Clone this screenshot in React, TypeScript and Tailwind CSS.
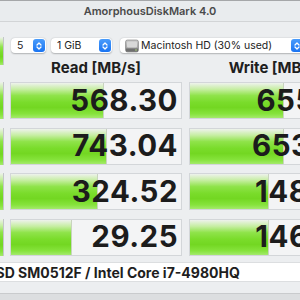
import React from 'react';

const rows = [
  { read: '568.30', readBar: 93, write: '655.41', writeBar: 94 },
  { read: '743.04', readBar: 96, write: '653.27', writeBar: 94 },
  { read: '324.52', readBar: 87, write: '148.93', writeBar: 79 },
  { read: '29.25', readBar: 61, write: '146.58', writeBar: 79 },
];

const barBg =
  'bg-[linear-gradient(to_bottom,#eef2ec_0%,#c6eea2_18%,#8fe34a_36%,#7adc2b_55%,#73d722_70%,#86e33c_88%,#a4ea6c_100%)]';

const Stepper = () => (
  <div className="w-[12px] h-[13px] rounded-[3px] bg-[linear-gradient(to_bottom,#4a9cfb,#1a74f2)] flex items-center justify-center">
    <svg width="8" height="10" viewBox="0 0 8 10" fill="none" stroke="white" strokeWidth="1.3" strokeLinecap="round" strokeLinejoin="round">
      <path d="M2 4 L4 2 L6 4" />
      <path d="M2 6 L4 8 L6 6" />
    </svg>
  </div>
);

const DiskIcon = () => (
  <svg width="14" height="14" viewBox="0 0 14 14">
    <defs>
      <linearGradient id="dk" x1="0" y1="0" x2="0" y2="1">
        <stop offset="0" stopColor="#c9c9c9" />
        <stop offset="1" stopColor="#8e8e8e" />
      </linearGradient>
    </defs>
    <rect x="0.5" y="1" width="13" height="12" rx="2" fill="url(#dk)" stroke="#7a7a7a" strokeWidth="0.6" />
    <rect x="2" y="2.5" width="10" height="6" rx="1" fill="#d8d8d8" />
    <rect x="1" y="9.5" width="12" height="3" fill="#6f6f6f" />
    <circle cx="11" cy="11" r="0.7" fill="#b9f07a" />
  </svg>
);

const Strip = ({ className }: { className: string }) => (
  <div className={`w-[4px] flex ${className}`}>
    <div className={`w-[3px] h-full ${barBg}`} />
    <div className="w-[1px] h-full bg-[#c3c6c9]" />
  </div>
);

const Cell = ({ value, bar }: { value: string; bar: number }) => (
  <div className="w-[172px] h-[37px] border border-[#d3d6d9] bg-[#f3f4f5] grid">
    <div className="[grid-area:1/1] h-full flex">
      <div className={`h-full ${barBg} border-r border-[#c8d4be]`} style={{ width: bar }} />
    </div>
    <div className="[grid-area:1/1] flex items-center justify-end pr-[3px] text-[29.5px] font-bold text-[#1c1c1c] leading-none tracking-[0.5px]">
      {value}
    </div>
  </div>
);

export default function App() {
  return (
    <div className="w-[300px] h-[300px] overflow-hidden bg-[#eceef0] font-['Inter','Liberation_Sans',sans-serif] flex flex-col">
      <div className="h-[22px] shrink-0 border-t border-[#a5a7a9] border-b border-b-[#d2d4d6] bg-[#e9ecee] flex items-center justify-center text-[11px] font-semibold text-[#4a4a4a]">
        AmorphousDiskMark 4.0
      </div>

      <div className="flex h-[60px] shrink-0">
        <div className="w-[4px] pt-[15px] shrink-0">
          <Strip className="h-[28px]" />
        </div>
        <div className="flex flex-col ml-[6px]">
          <div className="flex items-center h-[15px] mt-[16px] ml-[1px] text-[10.5px] text-[#222]">
            <div className="w-[35px] h-[15px] shrink-0 bg-white rounded-[4px] shadow-[0_0.5px_1.5px_rgba(0,0,0,0.25)] flex items-center justify-between pl-[6px] pr-[1px]">
              <span>5</span>
              <Stepper />
            </div>
            <div className="w-[61px] h-[15px] shrink-0 ml-[5px] bg-white rounded-[4px] shadow-[0_0.5px_1.5px_rgba(0,0,0,0.25)] flex items-center justify-between pl-[6px] pr-[1px]">
              <span>1 GiB</span>
              <Stepper />
            </div>
            <div className="w-[190px] h-[15px] shrink-0 ml-[8px] bg-white rounded-[4px] shadow-[0_0.5px_1.5px_rgba(0,0,0,0.25)] flex items-center pl-[5px] pr-[1px]">
              <DiskIcon />
              <span className="ml-[2px] whitespace-nowrap">Macintosh HD (30% used)</span>
              <div className="ml-auto mr-[6px]">
                <Stepper />
              </div>
            </div>
          </div>
          <div className="flex gap-[7px] mt-[6px] text-[15px] font-bold text-[#1e1e1e] leading-[17px]">
            <div className="w-[172px] text-center">Read [MB/s]</div>
            <div className="w-[172px] text-center whitespace-nowrap">Write [MB/s]</div>
          </div>
        </div>
      </div>

      <div className="flex flex-col gap-[8.5px] shrink-0">
        {rows.map((r, i) => (
          <div key={i} className="flex h-[37px]">
            <Strip className="h-[37px] shrink-0" />
            <div className="ml-[6px] shrink-0">
              <Cell value={r.read} bar={r.readBar} />
            </div>
            <div className="ml-[7px] shrink-0">
              <Cell value={r.write} bar={r.writeBar} />
            </div>
          </div>
        ))}
      </div>

      <div className="mt-[6.5px] h-[20px] shrink-0 bg-white border-y border-[#dcdee0] flex items-center overflow-hidden">
        <span className="-ml-[62px] whitespace-nowrap text-[14px] font-bold text-[#1e1e1e]">
          APPLE SSD SM0512F / Intel Core i7-4980HQ
        </span>
      </div>

      <div className="h-[11px] shrink-0" />
      <div className="flex-1 border-t border-[#c9cbcd] bg-[#dcdee0]" />
    </div>
  );
}
